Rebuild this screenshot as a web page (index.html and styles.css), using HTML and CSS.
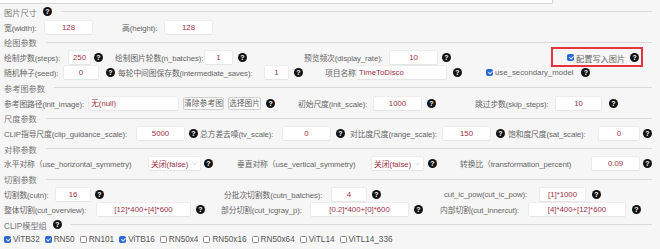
FILE: index.html
```html
<!DOCTYPE html>
<html lang="zh">
<head>
<meta charset="utf-8">
<title>参数</title>
<link rel="stylesheet" href="styles.css">
</head>
<body>
<div class="prev"></div>
<div class="form">
  <div class="hdr"><span>图片尺寸</span><span class="q">?</span><i class="rule"></i></div>
  <div class="row row-a">
    <div class="fld"><label class="l38">宽(width):</label><span class="in w47">128</span></div>
    <div class="fld"><label class="l40">高(height):</label><span class="in w47">128</span></div>
  </div>

  <div class="hdr"><span>绘图参数</span><i class="rule"></i></div>
  <div class="row row-b">
    <div class="fld"><label class="l62">绘制步数(steps):</label><span class="in w21">250</span><span class="q gap4">?</span></div>
    <div class="fld"><label class="l87">绘制图片轮数(n_batches):</label><span class="in w27">1</span><span class="q">?</span></div>
    <div class="fld"><label class="l83">预览频次(display_rate):</label><span class="in w47">10</span><span class="q gap5">?</span></div>
    <div class="fld mark"><span class="chk on"></span><span>配置写入图片</span><span class="q">?</span></div>
  </div>
  <div class="row row-c">
    <div class="fld"><label class="l57">随机种子(seed):</label><span class="in w34">0</span><span class="q gap8">?</span></div>
    <div class="fld"><label class="l144">每轮中间图保存数(intermediate_saves):</label><span class="in w23">1</span><span class="q">?</span></div>
    <div class="fld"><label class="l30">项目名称</label><span class="in w89 left tight">TimeToDisco</span><span class="q gap7">?</span></div>
    <div class="fld"><span class="chk on"></span><span>use_secondary_model</span><span class="q gap8">?</span></div>
  </div>

  <div class="hdr"><span>参考图参数</span><i class="rule"></i></div>
  <div class="row row-e">
    <div class="fld"><label class="l82">参考图路径(init_image):</label><span class="in w89 left">无(null)</span><span class="btn first">清除参考图</span><span class="btn">选择图片</span><span class="q gap5">?</span></div>
    <div class="fld"><label class="l73">初始尺度(init_scale):</label><span class="in w47">1000</span><span class="q">?</span></div>
    <div class="fld"><label class="l78">跳过步数(skip_steps):</label><span class="in w45">10</span><span class="q gap8">?</span></div>
  </div>

  <div class="hdr"><span>尺度参数</span><i class="rule"></i></div>
  <div class="row row-g">
    <div class="fld"><label class="l130">CLIP指导尺度(clip_guidance_scale):</label><span class="in w47">5000</span><span class="q gap5">?</span></div>
    <div class="fld"><label class="l80">总方差去噪(tv_scale):</label><span class="in w47">0</span><span class="q">?</span></div>
    <div class="fld"><label class="l90">对比度尺度(range_scale):</label><span class="in w47">150</span><span class="q">?</span></div>
    <div class="fld"><label>饱和度尺度(sat_scale):</label><span class="in w40 push">0</span><span class="q gap4">?</span></div>
  </div>

  <div class="hdr"><span>对称参数</span><i class="rule"></i></div>
  <div class="row row-i">
    <div class="fld"><label class="l139">水平对称（use_horizontal_symmetry)</label><span class="sel"><span>关闭(false)</span><svg class="caret" viewBox="0 0 6 4" width="5" height="4"><polyline points="0.5,0.5 3,3 5.5,0.5" fill="none" stroke="#b5b5b5" stroke-width="0.8"/></svg></span><span class="q gap4">?</span></div>
    <div class="fld"><label class="l129">垂直对称（use_vertical_symmetry)</label><span class="sel"><span>关闭(false)</span><svg class="caret" viewBox="0 0 6 4" width="5" height="4"><polyline points="0.5,0.5 3,3 5.5,0.5" fill="none" stroke="#b5b5b5" stroke-width="0.8"/></svg></span><span class="q gap5">?</span></div>
    <div class="fld"><label>转换比（transformation_percent)</label><span class="in w47 push">0.09</span><span class="q gap4">?</span></div>
  </div>

  <div class="hdr"><span>切割参数</span><i class="rule"></i></div>
  <div class="row row-k">
    <div class="fld"><label class="l49">切割数(cutn):</label><span class="in w34">16</span><span class="q gap5">?</span></div>
    <div class="fld"><label class="l105">分批次切割数(cutn_batches):</label><span class="in w34">4</span><span class="q">?</span></div>
    <div class="fld"><label class="l91">cut_ic_pow(cut_ic_pow):</label><span class="in w45 gap5">[1]*1000</span><span class="q gap7">?</span></div>
  </div>
  <div class="row row-l">
    <div class="fld"><label class="l90">整体切割(cut_overview):</label><span class="in w93">[12]*400+[4]*600</span><span class="q">?</span></div>
    <div class="fld"><label class="l85">部分切割(cut_icgray_p):</label><span class="in w97 gap5">[0.2]*400+[0]*600</span><span class="q">?</span></div>
    <div class="fld"><label class="l84">内部切割(cut_innercut):</label><span class="in w96 gap5">[4]*400+[12]*600</span><span class="q gap7">?</span></div>
  </div>

  <div class="hdr"><span>CLIP模型组</span><span class="q">?</span><i class="rule"></i></div>
  <div class="row models">
    <span class="opt"><span class="chk on"></span>ViTB32</span>
    <span class="opt"><span class="chk on"></span>RN50</span>
    <span class="opt"><span class="chk"></span>RN101</span>
    <span class="opt"><span class="chk on"></span>ViTB16</span>
    <span class="opt"><span class="chk"></span>RN50x4</span>
    <span class="opt"><span class="chk"></span>RN50x16</span>
    <span class="opt"><span class="chk"></span>RN50x64</span>
    <span class="opt"><span class="chk"></span>ViTL14</span>
    <span class="opt"><span class="chk"></span>ViTL14_336</span>
  </div>
</div>
</body>
</html>
```

FILE: styles.css
```css
* { box-sizing: border-box; margin: 0; padding: 0; }

html, body { background: #f6f6f6; }

body {
  width: 660px;
  height: 249px;
  overflow: hidden;
  font-family: "Liberation Sans", "Noto Sans CJK SC", sans-serif;
  font-size: 8.2px;
  color: #666;
}

.prev {
  width: 553px;
  height: 4px;
  background: #fff;
  border-right: 1px solid #d4d4d4;
  border-bottom: 1px solid #d4d4d4;
  border-radius: 0 0 2px 0;
}

.form { padding: 0.4px 8px 0 4px; }

.hdr {
  height: 15.2px;
  display: flex;
  align-items: center;
  color: #777;
  white-space: nowrap;
}
.hdr .q { margin-left: 6px; }

.rule {
  flex: 1;
  height: 1px;
  background: #dadada;
  margin-left: 9px;
}

.row {
  height: 15.2px;
  display: grid;
  align-items: center;
}
.row-a { grid-template-columns: 118px 1fr; }
.row-b { grid-template-columns: 111px 189px 247px 92px; }
.row-c { grid-template-columns: 114px 207px 161px 1fr; }
.row-e { grid-template-columns: 294px 177px 1fr; }
.row-g { grid-template-columns: 196px 150px 158px 1fr; }
.row-i { grid-template-columns: 233px 223px 1fr; }
.row-k { grid-template-columns: 220px 220px 1fr; }
.row-l { grid-template-columns: 217px 219px 1fr; }

.fld {
  display: flex;
  align-items: center;
  white-space: nowrap;
  height: 15px;
  font-size: 7.8px;
}

.fld label {
  flex: none;
  display: block;
  letter-spacing: -0.1px;
}
.l30 { width: 30px; }
.l38 { width: 38px; }
.l40 { width: 40px; }
.l49 { width: 49px; }
.l57 { width: 57px; }
.l62 { width: 62px; }
.l73 { width: 73px; }
.l78 { width: 78px; }
.l80 { width: 80px; }
.l82 { width: 82px; }
.l83 { width: 83px; }
.l84 { width: 84px; }
.l85 { width: 85px; }
.l87 { width: 87px; }
.l90 { width: 90px; }
.l91 { width: 91px; }
.l105 { width: 105px; }
.l129 { width: 129px; }
.l130 { width: 130px; }
.l139 { width: 139px; }
.l144 { width: 144px; }

.in {
  flex: none;
  height: 13px;
  line-height: 13px;
  margin-left: 3px;
  background: #fff;
  color: #9c2f3f;
  text-align: center;
  border-radius: 1px;
  box-shadow: 0 0 0 0.6px #e4e4e4, 0 1px 1px rgba(0, 0, 0, 0.07);
  overflow: hidden;
}
.in.left { text-align: left; padding-left: 2px; }
.in.tight { margin-left: 2px; }
.in.gap5 { margin-left: 5px; }
.push { margin-left: auto !important; }

.w21 { width: 21px; }
.w23 { width: 23px; }
.w27 { width: 27px; }
.w34 { width: 34px; }
.w40 { width: 40px; }
.w45 { width: 45px; }
.w47 { width: 47px; }
.w89 { width: 89px; }
.w93 { width: 93px; }
.w96 { width: 96px; }
.w97 { width: 97px; }

.q {
  flex: none;
  width: 9px;
  height: 9px;
  margin-left: 6px;
  border-radius: 50%;
  background: #121212;
  color: #fff;
  font: bold 7px/9px "Liberation Sans", sans-serif;
  letter-spacing: 0;
  text-align: center;
}
.q.gap4 { margin-left: 4px; }
.q.gap5 { margin-left: 5px; }
.q.gap7 { margin-left: 7px; }
.q.gap8 { margin-left: 8px; }

.btn {
  flex: none;
  height: 13px;
  line-height: 11px;
  margin-left: 4px;
  padding: 0;
  border: 1px solid #cfcfcf;
  border-radius: 2px;
  background: #fff;
  color: #606060;
  font-size: 7.8px;
}
.btn.first { margin-left: 5px; }

.sel {
  flex: none;
  width: 51px;
  height: 13px;
  margin-left: 6px;
  padding: 0 3px 0 2px;
  display: flex;
  align-items: center;
  justify-content: space-between;
  background: #fff;
  color: #9c2f3f;
  border-radius: 1px;
  box-shadow: 0 0 0 0.6px #e4e4e4, 0 1px 1px rgba(0, 0, 0, 0.07);
}
.caret { display: block; }

.chk {
  flex: none;
  position: relative;
  width: 7px;
  height: 7px;
  margin-right: 2px;
  border: 1px solid #8c8c8c;
  border-radius: 1.5px;
  background: #fff;
}
.chk.on {
  background: #2c6ad2;
  border-color: #2c6ad2;
}
.chk.on::after {
  content: "";
  position: absolute;
  left: 1.5px;
  top: 0;
  width: 1.5px;
  height: 3px;
  border-right: 0.8px solid rgba(255, 255, 255, 0.85);
  border-bottom: 0.8px solid rgba(255, 255, 255, 0.85);
  transform: rotate(45deg);
}

.mark {
  position: relative;
  padding-left: 16px;
  font-size: 8.2px;
}
.mark .q { margin-left: 5px; }
.mark::after {
  content: "";
  position: absolute;
  left: 0;
  right: 0;
  top: -3px;
  bottom: -2px;
  border: 2px solid #e5343b;
}

.models {
  display: flex;
  align-items: center;
  gap: 5px;
  color: #555;
}
.opt {
  display: flex;
  align-items: center;
  white-space: nowrap;
}
```
